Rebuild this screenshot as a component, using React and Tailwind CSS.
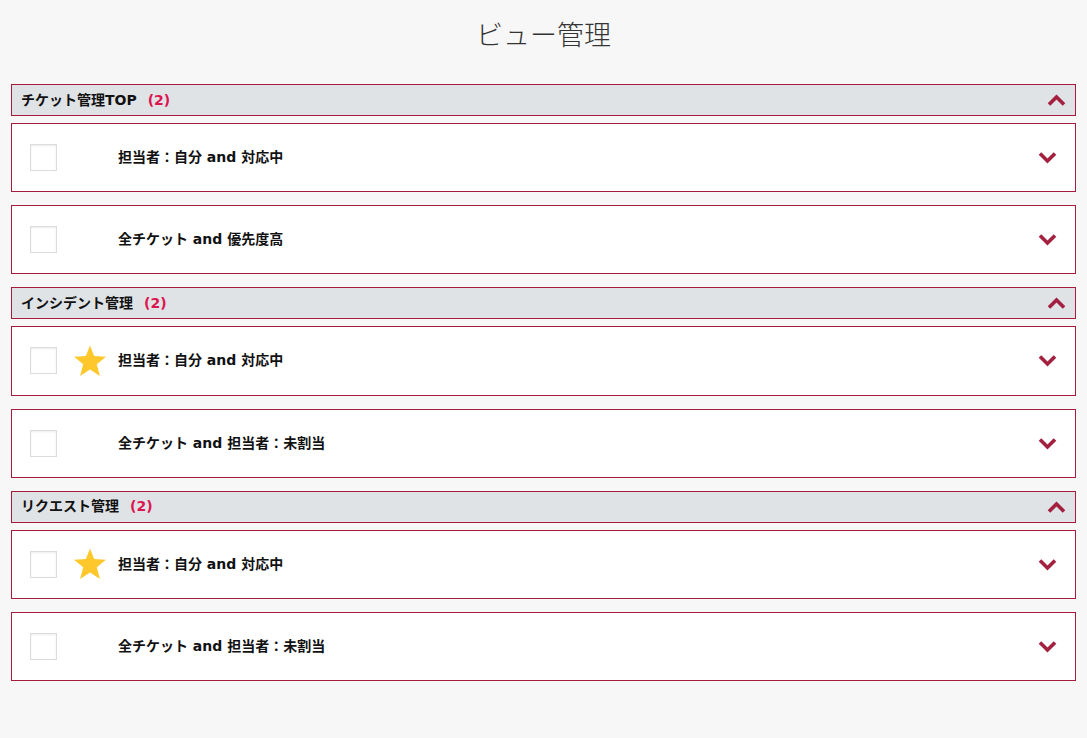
import React from "react";

const font = { fontFamily: '"DejaVu Sans", "Noto Sans CJK JP", sans-serif' };

function ChevronUp() {
  return (
    <svg width="19" height="12" viewBox="0 0 19 12" className="block">
      <polyline points="2,10.5 9.5,3 17,10.5" fill="none" stroke="#a3203f" strokeWidth="3.6" strokeLinejoin="miter" />
    </svg>
  );
}

function ChevronDown() {
  return (
    <svg width="19" height="13" viewBox="0 0 19 13" className="block">
      <polyline points="2,2.5 9.5,10 17,2.5" fill="none" stroke="#a3203f" strokeWidth="3.6" strokeLinejoin="miter" />
    </svg>
  );
}

function Star() {
  return (
    <svg width="35" height="34" viewBox="0 0 34 33" className="block">
      <polygon
        points="17,1 21.2,11.6 33,12.3 23.8,19.8 26.9,31.4 17,25 7.1,31.4 10.2,19.8 1,12.3 12.8,11.6"
        fill="#fec82c"
      />
    </svg>
  );
}

const sections = [
  {
    title: "チケット管理TOP",
    items: [
      { label: "担当者：自分 and 対応中", star: false },
      { label: "全チケット and 優先度高", star: false },
    ],
  },
  {
    title: "インシデント管理",
    items: [
      { label: "担当者：自分 and 対応中", star: true },
      { label: "全チケット and 担当者：未割当", star: false },
    ],
  },
  {
    title: "リクエスト管理",
    items: [
      { label: "担当者：自分 and 対応中", star: true },
      { label: "全チケット and 担当者：未割当", star: false },
    ],
  },
];

export default function App() {
  return (
    <div className="min-h-[738px] w-full bg-[#f7f7f7] px-[11px]" style={font}>
      <div className="h-[84px] pt-[15px] text-center">
        <h1
          className="text-[27px] leading-[38px] font-normal text-[#333333]"
          style={{ fontFamily: '"Noto Sans CJK JP", sans-serif', fontWeight: 300 }}
        >
          ビュー管理
        </h1>
      </div>
      <div className="flex flex-col gap-[13px]">
        {sections.map((s, i) => (
          <div key={i} className="flex flex-col">
            <div className="flex h-[32px] items-center justify-between border border-[#a51c3c] bg-[#dfe3e6] pl-[9px] pr-[9px]">
              <div className="flex items-center text-[14px] font-bold text-[#111111]">
                <span>{s.title}</span>
                <span className="ml-[11px] text-[#dc1450]">(2)</span>
              </div>
              <ChevronUp />
            </div>
            <div className="mt-[7px] flex flex-col gap-[13px]">
              {s.items.map((it, j) => (
                <div
                  key={j}
                  className="flex h-[69.2px] items-center border border-[#a51c3c] bg-white pl-[18px] pr-[18px]"
                >
                  <div className="h-[27px] w-[27px] shrink-0 border border-[#dcdcdc] bg-white shadow-[inset_0_1px_2px_rgba(0,0,0,0.08)]" />
                  <div className="ml-[16px] flex w-[34px] shrink-0 items-center justify-center">
                    {it.star ? <Star /> : null}
                  </div>
                  <div className="ml-[11px] flex-1 text-[14px] font-bold text-[#111111]">{it.label}</div>
                  <ChevronDown />
                </div>
              ))}
            </div>
          </div>
        ))}
      </div>
    </div>
  );
}
